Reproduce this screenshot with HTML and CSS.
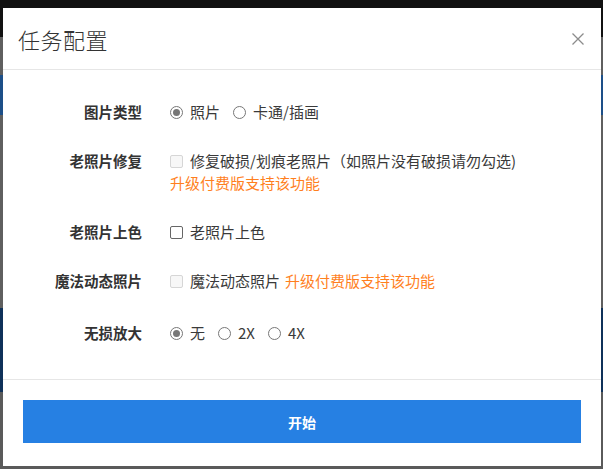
FILE: index.html
```html
<!DOCTYPE html>
<html lang="zh">
<head>
<meta charset="utf-8">
<title>任务配置</title>
<link rel="stylesheet" href="styles.css">
</head>
<body>
<div class="backdrop">
  <div class="modal">
    <div class="modal-header">
      <h2 class="modal-title">任务配置</h2>
      <span class="close" aria-label="关闭">
        <svg width="12" height="12" viewBox="0 0 12 12"><path d="M0.5 0.5 L11.5 11.5 M11.5 0.5 L0.5 11.5" stroke="#8c8c8c" stroke-width="1.3" fill="none"/></svg>
      </span>
    </div>
    <div class="modal-body">
      <div class="row">
        <div class="label">图片类型</div>
        <div class="ctrl">
          <label class="opt"><span class="radio checked"></span>照片</label>
          <label class="opt"><span class="radio"></span>卡通/插画</label>
        </div>
      </div>
      <div class="row">
        <div class="label">老照片修复</div>
        <div class="ctrl col">
          <label class="opt"><span class="check disabled"></span>修复破损/划痕老照片（如照片没有破损请勿勾选)</label>
          <span class="upgrade">升级付费版支持该功能</span>
        </div>
      </div>
      <div class="row">
        <div class="label">老照片上色</div>
        <div class="ctrl">
          <label class="opt"><span class="check"></span>老照片上色</label>
        </div>
      </div>
      <div class="row">
        <div class="label">魔法动态照片</div>
        <div class="ctrl">
          <label class="opt tight"><span class="check disabled"></span>魔法动态照片</label>
          <span class="upgrade">升级付费版支持该功能</span>
        </div>
      </div>
      <div class="row row-last">
        <div class="label">无损放大</div>
        <div class="ctrl">
          <label class="opt"><span class="radio checked"></span>无</label>
          <label class="opt"><span class="radio"></span>2X</label>
          <label class="opt"><span class="radio"></span>4X</label>
        </div>
      </div>
    </div>
    <div class="modal-footer">
      <button class="start">开始</button>
    </div>
  </div>
</div>
</body>
</html>
```

FILE: styles.css
```css
html, body {
  margin: 0;
  padding: 0;
}
body {
  width: 603px;
  height: 469px;
  overflow: hidden;
  font-family: "Noto Sans CJK SC", "Noto Sans", sans-serif;
  color: #333;
  background:
    linear-gradient(to bottom,
      #111 0, #111 37px,
      #5f5f5f 37px, #5f5f5f 75px,
      #1d4f88 75px, #1d4f88 115px,
      #5f5f5f 115px, #5f5f5f 308px,
      #0f3159 308px, #0f3159 392px,
      #5a5a5a 392px, #5a5a5a 469px);
}
.backdrop {
  padding: 8px 2px 3px 3px;
}
.modal {
  width: 598px;
  height: 458px;
  background: #fff;
  display: flex;
  flex-direction: column;
}
.modal-header {
  height: 62px;
  border-bottom: 1px solid #e6e6e6;
  display: flex;
  align-items: center;
  justify-content: space-between;
  padding: 0 17px 0 15px;
  box-sizing: border-box;
  flex: none;
}
.modal-title {
  margin: 0;
  font-size: 22px;
  font-weight: 300;
  color: #333;
  letter-spacing: 0.5px;
}
.close {
  display: flex;
  width: 12px;
  height: 12px;
}
.modal-body {
  flex: 1;
  padding: 31px 0 0 0;
  display: flex;
  flex-direction: column;
  gap: 27px;
  border-bottom: 1px solid #e6e6e6;
}
.row {
  display: flex;
  align-items: flex-start;
}
.row-last {
  margin-top: 3px;
}
.label {
  width: 139px;
  text-align: right;
  font-size: 14.5px;
  font-weight: 700;
  line-height: 22px;
  color: #333;
  flex: none;
}
.ctrl {
  margin-left: 28px;
  display: flex;
  align-items: center;
  font-size: 15px;
  line-height: 22px;
  color: #3a3a3a;
}
.ctrl.col {
  flex-direction: column;
  align-items: flex-start;
}
.opt {
  display: inline-flex;
  align-items: center;
  margin-right: 13px;
}
.opt.tight {
  margin-right: 5px;
}
.radio {
  width: 11px;
  height: 11px;
  border: 1px solid #777;
  border-radius: 50%;
  margin-right: 7px;
  position: relative;
  box-sizing: content-box;
}
.radio.checked::after {
  content: "";
  position: absolute;
  left: 2px;
  top: 2px;
  width: 7px;
  height: 7px;
  border-radius: 50%;
  background: #777;
}
.check {
  width: 11px;
  height: 11px;
  border: 1px solid #666;
  border-radius: 2px;
  margin-right: 7px;
  box-sizing: content-box;
}
.check.disabled {
  border-color: #d6d6d6;
  background: #f7f7f7;
}
.upgrade {
  color: #ff7f1e;
  font-size: 15px;
  line-height: 22px;
}
.modal-footer {
  flex: none;
  padding: 20px 20px 23px 20px;
}
.start {
  display: block;
  width: 558px;
  height: 43px;
  border: none;
  background: #2680e3;
  color: #fff;
  font-family: "Noto Sans CJK SC", sans-serif;
  font-size: 14px;
  font-weight: 700;
  cursor: pointer;
}
```
